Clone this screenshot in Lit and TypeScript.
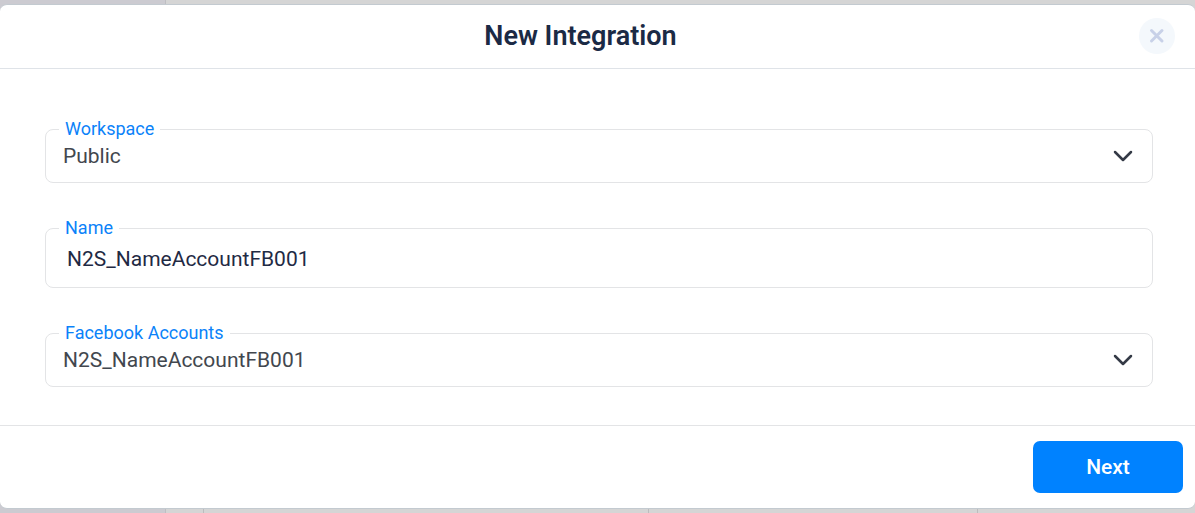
import { LitElement, html, css } from "lit";
import { customElement, property, state } from "lit/decorators.js";

const fieldStyles = css`
  :host {
    display: block;
    position: relative;
  }
  .label {
    position: absolute;
    top: -12px;
    left: 14px;
    padding: 0 6px;
    background: #fff;
    color: #0b82f9;
    font-size: 18px;
    line-height: 24px;
  }
  .control {
    display: block;
    box-sizing: border-box;
    width: 100%;
    margin: 0;
    border: 1px solid #e3e4e6;
    border-radius: 8px;
    background: transparent;
    font: inherit;
    font-size: 21px;
    outline: none;
  }
`;

@customElement("select-field")
class SelectField extends LitElement {
  @property() label = "";
  @property({ type: Array }) options: string[] = [];

  static styles = [
    fieldStyles,
    css`
      .control {
        height: 54px;
        padding: 0 56px 0 17px;
        color: #42474e;
        appearance: none;
      }
      .arrow {
        position: absolute;
        top: 21px;
        right: 20px;
        width: 20px;
        height: 13px;
        pointer-events: none;
      }
    `,
  ];

  render() {
    return html`
      <select class="control" id="control">
        ${this.options.map((o) => html`<option>${o}</option>`)}
      </select>
      <label class="label" for="control">${this.label}</label>
      <svg class="arrow" viewBox="0 0 20 13" aria-hidden="true">
        <path d="M2 2l8 8 8-8" fill="none" stroke="#343a46" stroke-width="2.5" stroke-linecap="round" stroke-linejoin="round" />
      </svg>
    `;
  }
}

@customElement("text-field")
class TextField extends LitElement {
  @property() label = "";
  @property() value = "";

  static styles = [
    fieldStyles,
    css`
      .control {
        height: 60px;
        padding: 1px 21px 0;
        color: #1f2a44;
      }
    `,
  ];

  render() {
    return html`
      <input class="control" id="control" type="text" .value=${this.value} />
      <label class="label" for="control">${this.label}</label>
    `;
  }
}

@customElement("app-root")
class AppRoot extends LitElement {
  @state() accountName = "N2S_NameAccountFB001";

  static styles = css`
    :host {
      display: flex;
      flex-direction: column;
      box-sizing: border-box;
      min-height: 100vh;
      padding: 4px 0;
      font-family: Roboto, sans-serif;
      background:
        linear-gradient(#bcbcbd, #bcbcbd) 203px 100% / 1px 5px no-repeat,
        linear-gradient(#bcbcbd, #bcbcbd) 648px 100% / 1px 5px no-repeat,
        linear-gradient(#bcbcbd, #bcbcbd) 977px 100% / 1px 5px no-repeat,
        linear-gradient(90deg, #cccbd1 165px, #bebec2 165px, #bebec2 166px, #d5d5d5 166px);
    }
    .dialog {
      flex: 1;
      display: flex;
      flex-direction: column;
      border: solid #c3cad0;
      border-width: 1px 0;
      border-radius: 7px;
      background: #fff;
    }
    .header {
      display: grid;
      grid-template-columns: 1fr auto 1fr;
      align-items: center;
      box-sizing: border-box;
      height: 64px;
      padding: 0 20px 1px 0;
      border-bottom: 1px solid #dfe3e8;
    }
    .title {
      grid-column: 2;
      margin: 0 14px 0 0;
      color: #1b2a45;
      font-size: 27px;
      font-weight: 600;
      line-height: 32px;
    }
    .close {
      justify-self: end;
      display: grid;
      place-items: center;
      width: 36px;
      height: 36px;
      padding: 0;
      border: 0;
      border-radius: 50%;
      background: #f4f8fc;
    }
    .cross {
      width: 16px;
      height: 16px;
    }
    .body {
      flex: 1;
      display: flex;
      flex-direction: column;
      gap: 45px;
      padding: 60px 42px 38px 45px;
    }
    .footer {
      display: flex;
      justify-content: flex-end;
      padding: 15px 12px 14px;
      border-top: 1px solid #e3e4e6;
    }
    .next {
      width: 150px;
      height: 52px;
      margin-bottom: 1px;
      border: 0;
      border-radius: 7px;
      background: #0082ff;
      color: #fff;
      font: inherit;
      font-size: 21px;
      font-weight: 500;
    }
  `;

  render() {
    return html`
      <section class="dialog" role="dialog" aria-labelledby="title">
        <header class="header">
          <h1 class="title" id="title">New Integration</h1>
          <button class="close" aria-label="Close">
            <svg class="cross" viewBox="0 0 16 16" aria-hidden="true">
              <path d="M2.500 2.500l10.500 10.500M13 2.500l-10.500 10.500" fill="none" stroke="#c8d1e8" stroke-width="3" stroke-linecap="round" />
            </svg>
          </button>
        </header>
        <div class="body">
          <select-field label="Workspace" .options=${["Public"]}></select-field>
          <text-field label="Name" .value=${this.accountName}></text-field>
          <select-field label="Facebook Accounts" .options=${[this.accountName]}></select-field>
        </div>
        <footer class="footer">
          <button class="next">Next</button>
        </footer>
      </section>
    `;
  }
}
